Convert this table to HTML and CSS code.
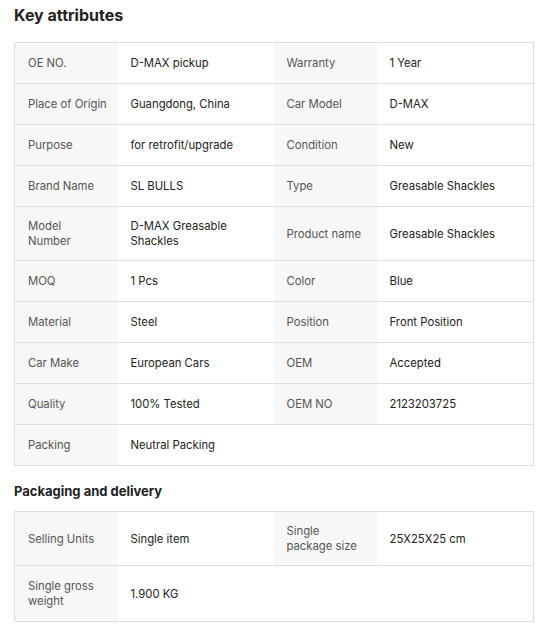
FILE: index.html
```html
<!DOCTYPE html>
<html>
<head>
<meta charset="utf-8">
<link rel="stylesheet" href="styles.css">
</head>
<body>
<h2 class="title">Key attributes</h2>
<table class="attrs">
<colgroup><col class="c1"><col class="c2"><col class="c3"><col class="c4"></colgroup>
<tr><td class="k">OE NO.</td><td class="v">D-MAX pickup</td><td class="k">Warranty</td><td class="v">1 Year</td></tr>
<tr><td class="k">Place of Origin</td><td class="v">Guangdong, China</td><td class="k">Car Model</td><td class="v">D-MAX</td></tr>
<tr><td class="k">Purpose</td><td class="v">for retrofit/upgrade</td><td class="k">Condition</td><td class="v">New</td></tr>
<tr><td class="k">Brand Name</td><td class="v">SL BULLS</td><td class="k">Type</td><td class="v">Greasable Shackles</td></tr>
<tr><td class="k">Model<br>Number</td><td class="v">D-MAX Greasable Shackles</td><td class="k">Product name</td><td class="v">Greasable Shackles</td></tr>
<tr><td class="k">MOQ</td><td class="v">1 Pcs</td><td class="k">Color</td><td class="v">Blue</td></tr>
<tr><td class="k">Material</td><td class="v">Steel</td><td class="k">Position</td><td class="v">Front Position</td></tr>
<tr><td class="k">Car Make</td><td class="v">European Cars</td><td class="k">OEM</td><td class="v">Accepted</td></tr>
<tr><td class="k">Quality</td><td class="v">100% Tested</td><td class="k">OEM NO</td><td class="v">2123203725</td></tr>
<tr><td class="k">Packing</td><td class="v">Neutral Packing</td><td class="e"></td><td class="e"></td></tr>
</table>
<h3 class="subtitle">Packaging and delivery</h3>
<table class="attrs">
<colgroup><col class="c1"><col class="c2"><col class="c3"><col class="c4"></colgroup>
<tr><td class="k">Selling Units</td><td class="v">Single item</td><td class="k">Single package size</td><td class="v">25X25X25 cm</td></tr>
<tr class="tall"><td class="k">Single gross weight</td><td class="v">1.900 KG</td><td class="e"></td><td class="e"></td></tr>
</table>
</body>
</html>
```
FILE: styles.css
```css
html, body { margin: 0; padding: 0; background: #fff; }
body {
  font-family: Inter, "Noto Sans", sans-serif;
  color: #222;
  padding: 0 20px 0 14px;
}
.title {
  margin: 0;
  padding-top: 4px;
  font-size: 16px;
  font-weight: 700;
  line-height: 22px;
  height: 38px;
  color: #222;
}
.subtitle {
  margin: 0;
  font-size: 13px;
  font-weight: 700;
  line-height: 16px;
  padding: 17px 0 12px;
  color: #222;
}
.attrs {
  border-collapse: collapse;
  table-layout: fixed;
  width: 519px;
  border: 1px solid #dedede;
}
.c1 { width: 103px; }
.c2 { width: 156px; }
.c3 { width: 103px; }
.c4 { width: 157px; }
.attrs td {
  border-top: 1px solid #dedede;
  height: 41px;
  padding: 12px 10px 11px 13px;
  box-sizing: border-box;
  font-size: 11.3px;
  line-height: 15px;
  vertical-align: middle;
}
.attrs tr.tall td { padding-top: 13px; padding-bottom: 12px; }
.attrs tr:first-child td { border-top: none; }
.attrs td.k { background: #f7f7f7; color: #555; }
.attrs td.v { color: #222; }
.attrs td.e { background: #fff; }
```
